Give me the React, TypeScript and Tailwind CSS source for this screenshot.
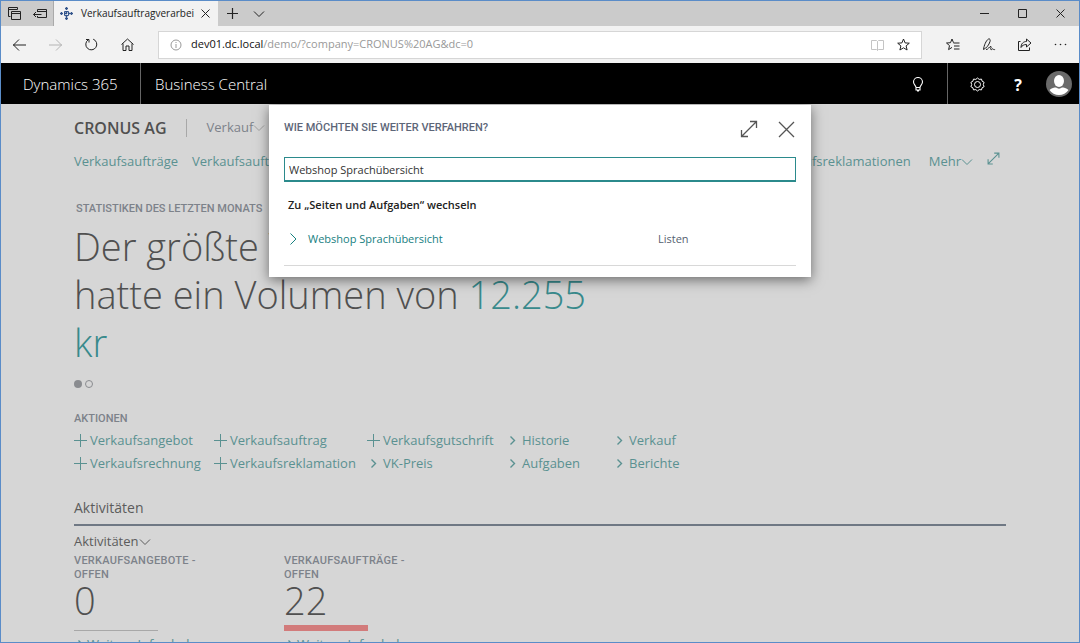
import type { ReactNode } from "react";
import { clsx } from "clsx";

const actionColumns = [
  [
    { label: "Verkaufsangebot", kind: "new" },
    { label: "Verkaufsrechnung", kind: "new" },
  ],
  [
    { label: "Verkaufsauftrag", kind: "new" },
    { label: "Verkaufsreklamation", kind: "new" },
  ],
  [
    { label: "Verkaufsgutschrift", kind: "new" },
    { label: "VK-Preis", kind: "open" },
  ],
  [
    { label: "Historie", kind: "open" },
    { label: "Aufgaben", kind: "open" },
  ],
  [
    { label: "Verkauf", kind: "open" },
    { label: "Berichte", kind: "open" },
  ],
];

const tiles = [
  { title: "Verkaufsangebote - offen", value: 0, alert: false },
  { title: "Verkaufsaufträge - offen", value: 22, alert: true },
];

/** Thin stroked icon; the view box equals the drawn size. */
function Icon({
  w = 16,
  h = 16,
  className,
  children,
}: {
  w?: number;
  h?: number;
  className?: string;
  children: ReactNode;
}) {
  return (
    <svg
      aria-hidden
      width={w}
      height={h}
      viewBox={`0 0 ${w} ${h}`}
      fill="none"
      stroke="currentColor"
      className={clsx("shrink-0", className)}
    >
      {children}
    </svg>
  );
}

function ChevronDown({ className }: { className?: string }) {
  return (
    <Icon w={12} h={8} className={className}>
      <path d="M1 1.5l5 5 5-5" />
    </Icon>
  );
}

function ExpandIcon({ size = 18 }: { size?: number }) {
  return (
    <svg
      aria-hidden
      width={size}
      height={size}
      viewBox="0 0 18 18"
      fill="none"
      stroke="currentColor"
      strokeWidth={size > 14 ? 1.3 : 1.5}
    >
      <path d="M1.5 16.5l15-15M10 1.5h6.5V8M1.5 10v6.5H8" />
    </svg>
  );
}

function IconButton({
  label,
  className,
  children,
}: {
  label: string;
  className?: string;
  children: ReactNode;
}) {
  return (
    <button
      type="button"
      aria-label={label}
      className={clsx("flex shrink-0 items-center justify-center", className)}
    >
      {children}
    </button>
  );
}

function TabStrip() {
  return (
    <div className="flex h-[25px] shrink-0 bg-[#cbcbcb] text-[#222]">
      <IconButton label="Beiseitegelegte Tabs" className="w-[26px]">
        <Icon w={13} h={13}>
          <path d="M2.5 9.500H.5v-9h9v2M.5 2.500h9" />
          <path d="M3.500 4.500h9v8h-9zM3.500 6.500h9" />
        </Icon>
      </IconButton>
      <IconButton label="Tabs beiseitelegen" className="w-[26px]">
        <Icon w={14} h={10}>
          <path d="M4.500 3V.5h9v8h-9V7M4.500 2.500h9M.5 5.500h8M3 3L.5 5.500 3 8" />
        </Icon>
      </IconButton>
      <div className="flex w-[165px] items-center border-l border-[#aaa] bg-[#f2f2f2] pl-1.5">
        <Icon w={13} h={13} className="text-[#33558c]">
          <path d="M6.500 0v13M0 6.500h13" strokeDasharray="3 1" strokeWidth={1.600} />
          <path d="M4.500 4.500h4v4h-4z" />
          <path d="M5 1.500h3M5 11.500h3M1.500 5v3M11.500 5v3" />
        </Icon>
        <span className="ml-2 text-[10px] whitespace-nowrap">Verkaufsauftragverarbei</span>
        <IconButton label="Tab schließen" className="mr-[3px] ml-auto size-5">
          <Icon w={9} h={9}>
            <path d="M.5.5l8 8M8.500.5l-8 8" />
          </Icon>
        </IconButton>
      </div>
      <IconButton label="Neuer Tab" className="w-7">
        <Icon w={11} h={11}>
          <path d="M5.500 0v11M0 5.500h11" strokeWidth={1.200} />
        </Icon>
      </IconButton>
      <IconButton label="Tabvorschau" className="w-[26px]">
        <ChevronDown />
      </IconButton>
      <div className="ml-auto flex">
        <IconButton label="Minimieren" className="w-[38px]">
          <Icon w={9} h={9}>
            <path d="M0 4.500h9" />
          </Icon>
        </IconButton>
        <IconButton label="Maximieren" className="w-[38px]">
          <Icon w={9} h={9}>
            <path d="M.5.5h8v8h-8z" />
          </Icon>
        </IconButton>
        <IconButton label="Schließen" className="w-[38px]">
          <Icon w={9} h={9}>
            <path d="M.5.5l8 8M8.500.5l-8 8" />
          </Icon>
        </IconButton>
      </div>
    </div>
  );
}

function AddressBar() {
  return (
    <div className="flex h-[37px] shrink-0 items-center bg-[#f2f2f2] text-[#222]">
      <IconButton label="Zurück" className="h-8 w-9">
        <Icon w={13} h={12}>
          <path d="M0 6h13M6 .5L.5 6 6 11.500" />
        </Icon>
      </IconButton>
      <IconButton label="Vorwärts" className="h-8 w-9 text-[#b4b4b4]">
        <Icon w={13} h={12}>
          <path d="M0 6h13M7 .5L12.500 6 7 11.500" />
        </Icon>
      </IconButton>
      <IconButton label="Aktualisieren" className="h-8 w-9">
        <Icon w={13} h={13}>
          <path d="M3.200 1.800a5.500 5.500 0 1 0 5-.6M1 1.500h3v3" />
        </Icon>
      </IconButton>
      <IconButton label="Startseite" className="h-8 w-9">
        <Icon w={13} h={13}>
          <path d="M.5 6.500l6-5.500 6 5.500M2 5.500v7h3v-4.500h3v4.500h3v-7" />
        </Icon>
      </IconButton>
      <div className="ml-[13px] flex h-7 flex-1 items-center border border-[#d6d6d6] bg-white pl-[11px]">
        <Icon w={12} h={12} className="text-[#999]">
          <circle cx="6" cy="6" r="5" />
          <path d="M6 5v4M6 3v1" />
        </Icon>
        <span className="ml-[9px] text-[11px] text-[#999]">
          <span className="text-[#111]">dev01.dc.local</span>
          /demo/?company=CRONUS%20AG&amp;dc=0
        </span>
        <IconButton label="Leseansicht" className="ml-auto h-6 w-[26px] text-[#c4c4c4]">
          <Icon w={13} h={12}>
            <path d="M.5 1.500h5l1 1 1-1h5v9h-5l-1 1-1-1h-5zM6.500 2.500v9" />
          </Icon>
        </IconButton>
        <IconButton label="Zu Favoriten hinzufügen" className="mr-[5px] h-6 w-[26px]">
          <Icon w={13} h={13}>
            <path d="M6.500 1l1.600 3.900 4.200.3-3.200 2.700 1 4.100-3.600-2.200L2.900 12l1-4.100L.7 5.200l4.200-.3z" />
          </Icon>
        </IconButton>
      </div>
      <div className="ml-[13px] flex pr-px">
        <IconButton label="Hub" className="h-8 w-9">
          <Icon w={14} h={13}>
            <path d="M7.500 4.700L6 1 4.500 4.700l-4 .3 3 2.600-.9 4L6 9.400M7.500 5h6M8 8h5.500M8 11h5.500" />
          </Icon>
        </IconButton>
        <IconButton label="Notizen hinzufügen" className="h-8 w-9">
          <Icon w={14} h={13}>
            <path d="M1.500 11.500C2 7.500 4 2.500 6.500 1c1.500-.5 2 .8 1.500 2.500C7 7 4.500 10 1.500 11.500zM4 11.500c2 .5 3.500-3.500 5-3 1 .5-1.500 3 0 3.200 1 .1 1.300-1.200 2-.9.700.3.200 1 1 1 .5 0 .8-.3 1-.6" />
          </Icon>
        </IconButton>
        <IconButton label="Teilen" className="h-8 w-[35px]">
          <Icon w={14} h={13}>
            <path d="M2.500 3.500h-2v9h11v-3M8.500 1l4.500 4-4.500 4V6.500C6 6.500 4 7.500 3 9.500c0-4 2.500-6 5.500-6z" />
          </Icon>
        </IconButton>
        <IconButton label="Mehr" className="h-8 w-9">
          <svg aria-hidden width={13} height={3} viewBox="0 0 13 3" fill="currentColor">
            <circle cx="1.500" cy="1.500" r=".8" />
            <circle cx="6.500" cy="1.500" r=".8" />
            <circle cx="11.500" cy="1.500" r=".8" />
          </svg>
        </IconButton>
      </div>
    </div>
  );
}

function ProductBar() {
  return (
    <header className="flex h-[41px] shrink-0 items-stretch bg-black text-[15px] font-light text-white">
      <a
        href="#dynamics"
        className="flex w-[140px] items-center border-r border-[#666] pt-0.5 pl-[22px]"
      >
        Dynamics 365
      </a>
      <a href="#home" className="flex items-center pt-0.5 pl-3.5">
        Business Central
      </a>
      <div className="ml-auto flex pr-[5px]">
        <IconButton label="Suchen" className="w-[60px] border-r border-[#666] pt-0.5">
          <Icon w={12} h={15}>
            <path
              d="M4 10.500C4 8.500 1.500 7.500 1.500 5a4.500 4.500 0 0 1 9 0c0 2.500-2.500 3.500-2.500 5.500zM4 10.500v2.500h4v-2.500M5 14h2"
              strokeWidth={1.100}
            />
          </Icon>
        </IconButton>
        <IconButton label="Einstellungen" className="w-[58px] pt-0.5">
          <Icon w={15} h={15}>
            <path d="M7.500 1l1.700 1.400 2.300-.3.600 2.100 2 1.100-.8 2.200.8 2.200-2 1.100-.6 2.100-2.300-.3-1.700 1.400-1.700-1.400-2.300.3-.6-2.100-2-1.100.8-2.200-.8-2.200 2-1.100.6-2.100 2.300.3z" />
            <circle cx="7.500" cy="7.500" r="3" />
          </Icon>
        </IconButton>
        <IconButton label="Hilfe" className="w-6 pt-0.5 text-base font-bold">
          ?
        </IconButton>
        <IconButton label="Konto" className="ml-3.5 w-[30px]">
          <svg aria-hidden width={26} height={26} viewBox="0 0 26 26">
            <circle cx="13" cy="13" r="13" fill="#6a6a6a" />
            <ellipse cx="13" cy="10" rx="5" ry="6" fill="#fff" />
            <path
              d="M3.500 19c2-2 5-2.500 6.500-2.500 2 1.500 4 1.500 6 0 1.500 0 4.500.5 6.500 2.500a11.500 11.500 0 0 1-19 0z"
              fill="#fff"
            />
          </svg>
        </IconButton>
      </div>
    </header>
  );
}

function ActionLink({ label, kind }: { label: string; kind: string }) {
  return (
    <a href="#action" className="flex h-[23px] items-center">
      <span className="flex w-4 shrink-0">
        {kind === "new" ? (
          <Icon w={13} h={13}>
            <path d="M6.500 0v13M0 6.500h13" />
          </Icon>
        ) : (
          <Icon w={13} h={9}>
            <path d="M4.500.5l4 4-4 4" strokeWidth={1.400} />
          </Icon>
        )}
      </span>
      {label}
    </a>
  );
}

function CueTile({ title, value, alert }: { title: string; value: number; alert: boolean }) {
  return (
    <a href="#cue" className="block w-[210px]">
      <h3 className="w-[130px] font-['Roboto',sans-serif] text-[11px] leading-[14px] font-medium tracking-wide text-[#7d828a] uppercase">
        {title}
      </h3>
      <div className="text-[38px] leading-9 font-light text-[#505050]">{value}</div>
      <div className="flex h-[13px] items-end">
        <div className={clsx("w-[84px]", alert ? "h-1.5 bg-[#d27b7b]" : "h-px bg-[#a8a8a8]")} />
      </div>
      <div className="mt-1 flex items-center whitespace-nowrap text-[#5a9191]">
        <Icon w={13} h={9}>
          <path d="M4.500.5l4 4-4 4" strokeWidth={1.400} />
        </Icon>
        Weitere Infos laden
      </div>
    </a>
  );
}

function RoleCenter() {
  return (
    <main className="flex-1 bg-[#d6d6d6] px-[73px] text-[13px] text-[#5a9191]">
      <div className="flex h-9 items-center pt-3">
        <h1 className="text-base font-semibold text-[#505050]">CRONUS AG</h1>
        <div className="ml-[19px] h-[18px] border-l border-[#a8a8a8]" />
        <button type="button" className="ml-5 flex items-center text-[#7d828a]">
          Verkauf
          <ChevronDown className="text-[#a0a0a0]" />
        </button>
      </div>

      <nav className="mt-3 flex h-5 items-center justify-between">
        <div className="flex gap-3.5">
          <a href="#orders">Verkaufsaufträge</a>
          <a href="#archive">Verkaufsauftragsarchive</a>
        </div>
        <div className="flex items-center">
          <a href="#returns">Verkaufsreklamationen</a>
          <button type="button" className="ml-[18px] flex items-center">
            Mehr
            <ChevronDown />
          </button>
          <IconButton label="Erweitern" className="mr-1.5 ml-3.5 pb-2">
            <ExpandIcon size={13} />
          </IconButton>
        </div>
      </nav>

      <h2 className="mt-[29px] pl-0.5 font-['Roboto',sans-serif] text-[11px] leading-4 font-medium text-[#7d828a] uppercase">
        Statistiken des letzten Monats
      </h2>
      <p className="mt-[5px] text-[38px] leading-[48px] font-light text-[#505050]">
        Der größte Verkaufsauftrag
        <br />
        hatte ein Volumen von <span className="text-[#388a8c]">12.255</span>
        <br />
        <span className="text-[#388a8c]">kr</span>
      </p>
      <div className="mt-3.5 flex gap-[3px]">
        <button type="button" aria-label="Seite 1" className="size-2 rounded-full bg-[#8a8c90]" />
        <button
          type="button"
          aria-label="Seite 2"
          className="size-2 rounded-full border border-[#8a8c90]"
        />
      </div>

      <h2 className="mt-[23px] font-['Roboto',sans-serif] text-[11px] leading-4 font-medium text-[#7d828a]">
        AKTIONEN
      </h2>
      <div className="mt-0.5 grid grid-cols-[140px_153px_139px_107px_auto]">
        {actionColumns.map((column) => (
          <div key={column[0].label}>
            {column.map((action) => (
              <ActionLink key={action.label} {...action} />
            ))}
          </div>
        ))}
      </div>

      <h2 className="mt-[21px] border-b-2 border-[#6f7884] pb-1 text-sm leading-6 text-[#5c5c5c]">
        Aktivitäten
      </h2>
      <button type="button" className="mt-1.5 flex h-5 items-center text-[#5c5c5c]">
        Aktivitäten
        <ChevronDown />
      </button>
      <div className="mt-0.5 flex">
        {tiles.map((tile) => (
          <CueTile key={tile.title} {...tile} />
        ))}
      </div>
    </main>
  );
}

function TellMeDialog() {
  return (
    <div
      role="dialog"
      aria-labelledby="tell-me-title"
      className="absolute inset-x-0 top-px mx-auto w-[542px] bg-white px-[15px] pb-[11px] text-[11px] shadow-[0_3px_12px_rgba(0,0,0,0.5)]"
    >
      <div className="flex h-[52px] items-center">
        <h2
          id="tell-me-title"
          className="pb-1.5 font-['Roboto',sans-serif] text-[11px] font-medium text-[#5d6678] uppercase"
        >
          Wie möchten Sie weiter verfahren?
        </h2>
        <div className="ml-auto flex gap-5 pr-px pb-1 text-[#555]">
          <IconButton label="Erweitern">
            <ExpandIcon />
          </IconButton>
          <IconButton label="Schließen">
            <Icon w={17} h={17}>
              <path d="M1 1l15 15M16 1L1 16" strokeWidth={1.300} />
            </Icon>
          </IconButton>
        </div>
      </div>
      <input
        type="text"
        aria-labelledby="tell-me-title"
        defaultValue="Webshop Sprachübersicht"
        className="block h-[25px] w-full border border-b-2 border-[#2b8a8c] px-1 text-[#333] outline-none"
      />
      <h3 className="mt-[15px] pl-1 leading-4 font-semibold text-[#222]">
        Zu „Seiten und Aufgaben“ wechseln
      </h3>
      <div className="flex h-[53px] items-center border-b border-[#d8d8d8]">
        <a href="#webshop" className="flex w-[374px] items-center gap-2.5 pl-[5px] text-[#17807f]">
          <Icon w={9} h={12}>
            <path d="M1.500.5L7 6l-5.500 5.500" />
          </Icon>
          Webshop Sprachübersicht
        </a>
        <span className="text-[#555f70]">Listen</span>
      </div>
    </div>
  );
}

export default function App() {
  return (
    <div className="flex h-screen flex-col overflow-hidden border border-[#5a8cc8] font-['Open_Sans','Noto_Sans',sans-serif]">
      <TabStrip />
      <AddressBar />
      <ProductBar />
      <div className="relative flex min-h-0 flex-1 flex-col overflow-hidden">
        <RoleCenter />
        <TellMeDialog />
      </div>
    </div>
  );
}
